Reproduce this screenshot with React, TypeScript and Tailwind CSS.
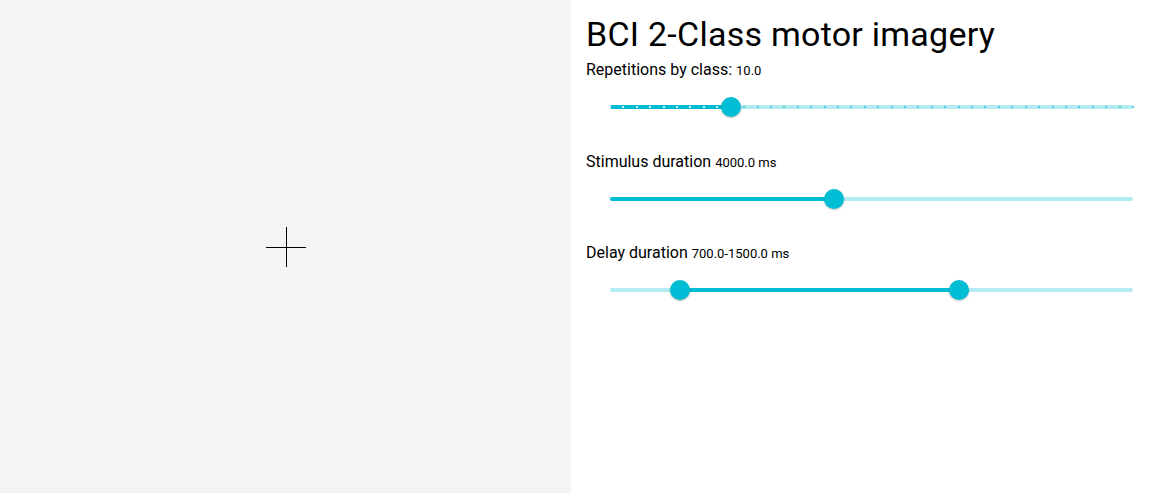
import React from 'react'

interface SliderProps {
  min: number
  max: number
  values: number[]
  step?: number
  ticks?: boolean
}

function Slider({ min, max, values, step, ticks }: SliderProps) {
  const pct = (v: number) => ((v - min) / (max - min)) * 100
  const range = values.length > 1
  const start = range ? pct(values[0]) : 0
  const end = pct(values[values.length - 1])
  const tickList: number[] = []
  if (ticks && step) {
    for (let v = min; v <= max; v += step) tickList.push(pct(v))
  }

  return (
    <div className="relative mx-6 h-5">
      <div className="absolute left-0 right-0 top-1/2 h-1 -translate-y-1/2 rounded-full bg-[#b2ebf2]" />
      <div
        className="absolute top-1/2 h-1 -translate-y-1/2 rounded-full bg-[#00bcd4]"
        style={{ left: `${start}%`, width: `${end - start}%` }}
      />
      {tickList.map((t, i) => (
        <div
          key={i}
          className={`absolute top-1/2 h-0.5 w-0.5 -translate-x-1/2 -translate-y-1/2 ${
            t <= end ? 'bg-white/80' : 'bg-[#4dd0e1]'
          }`}
          style={{ left: `${t}%` }}
        />
      ))}
      {values.map((v, i) => (
        <div
          key={i}
          className="absolute top-1/2 h-5 w-5 -translate-x-1/2 -translate-y-1/2 rounded-full bg-[#00bcd4] shadow-[0_1px_2px_rgba(0,0,0,0.25)]"
          style={{ left: `${pct(v)}%` }}
        />
      ))}
    </div>
  )
}

function Field({ label, value, children }: { label: string; value: string; children: React.ReactNode }) {
  return (
    <div className="mb-[32.5px]">
      <p className="text-base leading-6 text-black">
        {label} <span className="text-[13px]">{value}</span>
      </p>
      <div className="mt-[14px] mb-px">{children}</div>
    </div>
  )
}

export default function App() {
  return (
    <div className="flex h-[493px] w-[1172px] bg-white font-['Roboto',sans-serif]">
      <div className="flex w-[571px] items-center justify-center bg-[#f4f4f4]">
        <div className="relative h-10 w-10">
          <div className="absolute left-0 right-0 top-1/2 h-px bg-black" />
          <div className="absolute bottom-0 top-0 left-1/2 w-px bg-black" />
        </div>
      </div>

      <div className="flex-1 pl-[15px] pr-[15px] pt-[10px]">
        <h1 className="text-[34px] leading-[48px] tracking-[0.25px] text-black">BCI 2-Class motor imagery</h1>

        <Field label="Repetitions by class:" value="10.0">
          <Slider min={1} max={40} step={1} values={[10]} ticks />
        </Field>

        <Field label="Stimulus duration" value="4000.0 ms">
          <Slider min={1000} max={8000} values={[4000]} />
        </Field>

        <Field label="Delay duration" value="700.0-1500.0 ms">
          <Slider min={500} max={2000} values={[700, 1500]} />
        </Field>
      </div>
    </div>
  )
}
